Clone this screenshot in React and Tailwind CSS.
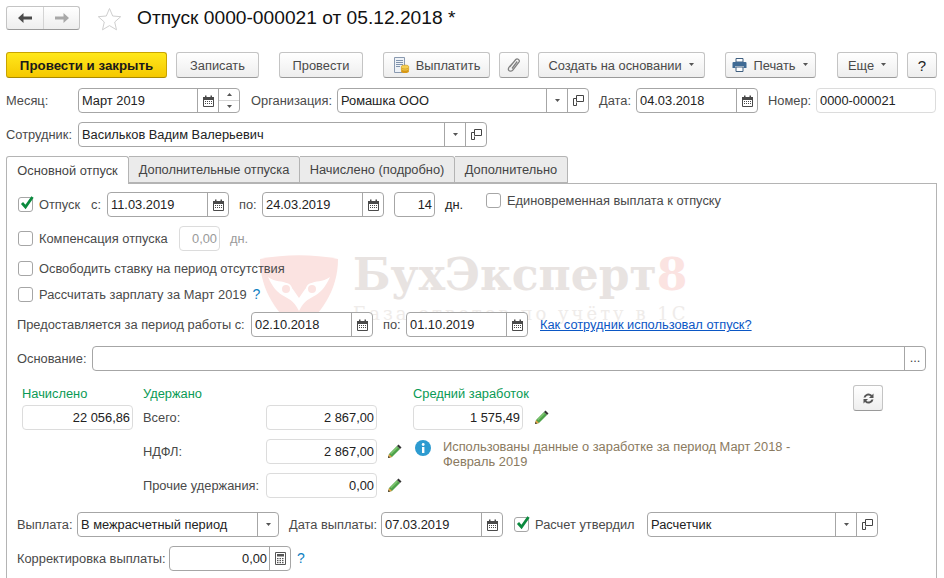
import React from "react";

const Cal = () => (
  <svg width="11" height="12" viewBox="0 0 11 12" className="block">
    <path d="M0.5 2.5h10v9h-10z" fill="#fff" stroke="#4a4a4a" />
    <rect x="0" y="2" width="11" height="3" fill="#4a4a4a" />
    <rect x="2" y="0.5" width="1.5" height="2.5" fill="#4a4a4a" />
    <rect x="7.5" y="0.5" width="1.5" height="2.5" fill="#4a4a4a" />
    {[2, 4, 6, 8].map((x) => <rect key={x} x={x} y="6" width="1" height="1" fill="#4a4a4a" />)}
    {[2, 4, 6, 8].map((x) => <rect key={x} x={x} y="8" width="1" height="1" fill="#4a4a4a" />)}
  </svg>
);
const Caret = () => <svg width="7" height="4" viewBox="0 0 7 4" className="block"><path d="M1 0h5L3.5 3z" fill="#555" /></svg>;
const OpenIcon = () => (
  <svg width="12" height="12" viewBox="0 0 12 12" className="block">
    <path d="M4.5 0.5h7v6h-7z" fill="none" stroke="#444" />
    <path d="M4.5 3.5h-3v7h3v-3" fill="none" stroke="#444" />
  </svg>
);
const Spin = () => (
  <div className="flex flex-col w-full h-full">
    <div className="flex-1 flex items-center justify-center border-b border-[#d5d5d5]"><svg width="5" height="3" viewBox="0 0 5 3"><path d="M2.5 0L5 3H0z" fill="#555" /></svg></div>
    <div className="flex-1 flex items-center justify-center"><svg width="5" height="3" viewBox="0 0 5 3"><path d="M0 0h5L2.5 3z" fill="#555" /></svg></div>
  </div>
);
const Calc = () => (
  <svg width="11" height="13" viewBox="0 0 11 13" className="block">
    <path d="M0.5 0.5h10v12h-10z" fill="#fff" stroke="#555" />
    <rect x="2" y="2" width="7" height="2.5" fill="#555" />
    {[2, 4.5, 7].map((x) => [6, 8, 10].map((y) => <rect key={x + "-" + y} x={x} y={y} width="1.5" height="1.2" fill="#555" />))}
  </svg>
);
const Pencil = () => (
  <svg width="15" height="15" viewBox="0 0 15 15" className="block">
    <path d="M1 14l1-4 8-8 3 3-8 8z" fill="#4ea24a" />
    <path d="M3.2 9.2l6.6-6.6 1.2 1.2-6.8 6.6z" fill="#7cc46e" />
    <path d="M1 14l1-4 3 3z" fill="#e8a24a" />
    <path d="M1 14l.5-2 1.5 1.5z" fill="#333" />
    <path d="M10 2l1.5-1.5 3 3L13 5z" fill="#333" />
  </svg>
);

function Field({ className, value, right, buttons = [], readOnly, textClass = "text-[#222]" }) {
  return (
    <div className={"flex h-[25px] shrink-0 rounded-[4px] overflow-hidden bg-white border " + (readOnly ? "border-[#dcdcdc] " : "border-[#a6a6a6] ") + (className || "")}>
      <div className={"flex-1 min-w-0 flex items-center pl-[3px] pr-[2px] whitespace-nowrap " + (right ? "justify-end " : "") + textClass}>{value}</div>
      {buttons.map((b, i) => (
        <div key={i} className="w-[21px] shrink-0 border-l border-[#a6a6a6] flex items-center justify-center">{b}</div>
      ))}
    </div>
  );
}

function Btn({ className, children, primary }) {
  return (
    <div className={"h-[26px] shrink-0 flex items-center justify-center rounded-[3px] border whitespace-nowrap " + (primary
      ? "bg-gradient-to-b from-[#ffe81a] to-[#f5c800] border-[#c9a400] border-b-[#a98a00] font-bold text-[13.3px] text-[#1a1a1a] "
      : "bg-gradient-to-b from-white to-[#eeeeee] border-[#c4c4c4] border-b-[#9a9a9a] text-[#4a4a4a] ") + (className || "")}>
      {children}
    </div>
  );
}

const Check = ({ on, className }) => (
  <div className={"relative w-[15px] h-[15px] shrink-0 rounded-[3px] border border-[#a6a6a6] bg-white " + (className || "")}>
    {on && (
      <svg width="16" height="16" viewBox="0 0 16 16" className="absolute left-[0px] top-[-3px]">
        <path d="M3 8l3.5 4L13.5 2" fill="none" stroke="#0b8a3e" strokeWidth="2.8" />
      </svg>
    )}
  </div>
);

const Label = ({ className, children }) => <div className={"shrink-0 whitespace-nowrap text-[#4a4a4a] " + (className || "")}>{children}</div>;
const Help = ({ className }) => <span className={"text-[#0f7fc2] text-[14px] " + (className || "")}>?</span>;

export default function App() {
  return (
    <div className="relative w-[944px] h-[578px] overflow-hidden bg-white text-[12.85px] leading-[15px] font-['Liberation_Sans',Arial,sans-serif]">
      {/* header */}
      <div className="flex items-center pl-[6px] pt-[6px] h-[30px]">
        <div className="flex w-[74px] h-[24px] rounded-[3px] border border-[#c4c4c4] border-b-[#9a9a9a] bg-gradient-to-b from-white to-[#eeeeee]">
          <div className="w-[37px] flex items-center justify-center border-r border-[#d4d4d4]">
            <svg width="14" height="10" viewBox="0 0 14 10"><path d="M5.5 0L0 5l5.5 5V6.5H14v-3H5.5z" fill="#4a4a4a" /></svg>
          </div>
          <div className="flex-1 flex items-center justify-center">
            <svg width="14" height="10" viewBox="0 0 14 10"><path d="M8.5 0L14 5l-5.500 5V6.500H0v-3h8.500z" fill="#a8a8a8" /></svg>
          </div>
        </div>
        <svg width="25" height="24" viewBox="0 0 25 24" className="ml-[17px] mt-[1px]">
          <path d="M12.500 1.500l3.200 7.500 8 .7-6 5.300 1.800 7.800-7-4.200-7 4.200 1.800-7.800-6-5.300 8-.7z" fill="#fff" stroke="#cfcfcf" />
        </svg>
        <div className="ml-[15px] text-[19.2px] leading-[24px] text-[#111] whitespace-nowrap">Отпуск 0000-000021 от 05.12.2018 *</div>
      </div>

      {/* toolbar */}
      <div className="flex mt-[22px] pl-[6px]">
        <Btn primary className="w-[161px]">Провести и закрыть</Btn>
        <Btn className="w-[83px] ml-[9px]">Записать</Btn>
        <Btn className="w-[84px] ml-[20px]">Провести</Btn>
        <Btn className="w-[107px] ml-[20px] gap-[6px]">
          <svg width="17" height="17" viewBox="0 0 17 17">
            <path d="M1.500 0.500h10v15h-10z" fill="#eef2f7" stroke="#8a9ab0" />
            <path d="M3 3.500h7M3 5.500h7M3 7.500h7M3 9.500h4" stroke="#7f93ad" />
            <ellipse cx="12" cy="14" rx="4" ry="2" fill="#d99a18" />
            <ellipse cx="12" cy="12" rx="4" ry="2" fill="#f0c040" stroke="#c08a10" strokeWidth="0.500" />
            <ellipse cx="12" cy="10" rx="4" ry="2" fill="#f5cf55" stroke="#c08a10" strokeWidth="0.500" />
          </svg>
          <span>Выплатить</span>
        </Btn>
        <Btn className="w-[30px] ml-[9px]">
          <svg width="15" height="16" viewBox="0 0 15 16">
            <path d="M2.800 9.800L8.800 2.500c1.500-1.700 4.600.6 3.100 2.700L6 12.800c-1.100 1.400-3.100 1.700-4 .8-.9-.9-.6-2.600.5-3.900L8 3.600M5 11.500l5.200-7" fill="none" stroke="#808080" strokeWidth="1.300" />
          </svg>
        </Btn>
        <Btn className="w-[167px] ml-[9px] gap-[6px]"><span>Создать на основании</span><Caret /></Btn>
        <Btn className="w-[91px] ml-[20px] gap-[6px]">
          <svg width="15" height="14" viewBox="0 0 15 14">
            <path d="M4 0.500h7V4H4z" fill="#fff" stroke="#3f5f80" />
            <path d="M1.500 4h12a1 1 0 0 1 1 1v5h-3V8h-8v2h-3V5a1 1 0 0 1 1-1z" fill="#3f6a94" />
            <path d="M4 9h7v4.500H4z" fill="#fff" stroke="#3f5f80" />
          </svg>
          <span>Печать</span><Caret />
        </Btn>
        <Btn className="w-[61px] ml-[21px] gap-[6px]"><span>Еще</span><Caret /></Btn>
        <Btn className="w-[30px] ml-[9px] text-[15px] text-[#222]">?</Btn>
      </div>

      {/* main rows */}
      <div className="flex items-center mt-[10px] pl-[6px] h-[25px]">
        <Label className="w-[72px]">Месяц:</Label>
        <Field className="w-[162px]" value="Март 2019" buttons={[<Cal />, <Spin />]} />
        <Label className="w-[86px] ml-[11px]">Организация:</Label>
        <Field className="w-[252px]" value="Ромашка ООО" buttons={[<Caret />, <OpenIcon />]} />
        <Label className="w-[37px] ml-[10px]">Дата:</Label>
        <Field className="w-[122px]" value="04.03.2018" buttons={[<Cal />]} />
        <Label className="w-[48px] ml-[10px]">Номер:</Label>
        <Field className="w-[120px]" readOnly value="0000-000021" />
      </div>
      <div className="flex items-center mt-[9px] pl-[6px] h-[25px]">
        <Label className="w-[72px]">Сотрудник:</Label>
        <Field className="w-[409px]" value="Васильков Вадим Валерьевич" buttons={[<Caret />, <OpenIcon />]} />
      </div>

      {/* tabs */}
      <div className="flex mt-[9px] ml-[6px] h-[28px] relative z-10">
        <div className="w-[123px] h-[28px] bg-white border border-[#b4b4b4] border-b-0 rounded-t-[3px] flex items-center justify-center text-[#444]">Основной отпуск</div>
        <div className="w-[171px] h-[27px] bg-[#ebebeb] border-y border-r border-[#b4b4b4] rounded-tr-[3px] flex items-center justify-center text-[#444]">Дополнительные отпуска</div>
        <div className="w-[155px] h-[27px] bg-[#ebebeb] border-y border-r border-[#b4b4b4] rounded-tr-[3px] flex items-center justify-center text-[#444]">Начислено (подробно)</div>
        <div className="w-[113px] h-[27px] bg-[#ebebeb] border-y border-r border-[#b4b4b4] rounded-tr-[3px] flex items-center justify-center text-[#444]">Дополнительно</div>
      </div>

      {/* panel */}
      <div className="relative ml-[6px] mt-[-1px] w-[931px] h-[396px] border-x border-t border-[#b4b4b4] pl-[10px]">
        {/* watermark */}
        <div className="absolute left-[253px] top-[71px] w-[440px] h-[90px] pointer-events-none select-none">
          <svg width="78" height="76" viewBox="0 0 78 76" className="absolute left-0 top-0">
            <path d="M0 4C25 -1 53 -1 78 4C78 36 60 60 39 76C18 60 0 36 0 4z" fill="#fbe3e1" />
            <path d="M8 22c8 6 14 3 20 7 4 3 6 7 11 14 5-7 7-11 11-14 6-4 12-1 20-7-4 9-8 14-14 18-6 4-11 4-17 16-6-12-11-12-17-16-6-4-10-9-14-18z" fill="#fff" />
            <circle cx="26" cy="34" r="5" fill="#fbe3e1" stroke="#fff" strokeWidth="2" />
            <circle cx="52" cy="34" r="5" fill="#fbe3e1" stroke="#fff" strokeWidth="2" />
          </svg>
          <div className="absolute left-[93px] top-[-6px] text-[44px] leading-[52px] font-bold whitespace-nowrap text-[#e8e3e1] font-['DejaVu_Serif',serif]">БухЭксперт<span className="text-[#fbe3e1]">8</span></div>
          <div className="absolute left-[93px] top-[48px] text-[18px] leading-[22px] tracking-[3px] whitespace-nowrap text-[#efecea] font-['DejaVu_Serif',serif]">База ответов по учёту в 1С</div>
        </div>

        <div className="relative">
          <div className="flex items-center mt-[8px] h-[25px]">
            <Check on className="ml-[1px]" />
            <Label className="w-[52px] ml-[6px]">Отпуск</Label>
            <Label className="w-[16px]">с:</Label>
            <Field className="w-[122px]" value="11.03.2019" buttons={[<Cal />]} />
            <Label className="w-[23px] ml-[10px]">по:</Label>
            <Field className="w-[122px]" value="24.03.2019" buttons={[<Cal />]} />
            <Field className="w-[41px] ml-[10px]" right value="14" />
            <Label className="ml-[10px] w-[41px] text-[#222]">дн.</Label>
            <Check className="self-start mt-[1px]" />
            <Label className="ml-[6px] self-start mt-[1px]">Единовременная выплата к отпуску</Label>
          </div>
          <div className="flex items-center mt-[9px] h-[25px]">
            <Check className="ml-[1px]" />
            <Label className="w-[140px] ml-[6px]">Компенсация отпуска</Label>
            <Field className="w-[41px]" readOnly right value="0,00" textClass="text-[#9a9a9a]" />
            <Label className="ml-[10px] text-[#9a9a9a]">дн.</Label>
          </div>
          <div className="flex items-center mt-[10px] h-[15px]">
            <Check className="ml-[1px]" />
            <Label className="ml-[6px]">Освободить ставку на период отсутствия</Label>
          </div>
          <div className="flex items-center mt-[11px] h-[15px]">
            <Check className="ml-[1px]" />
            <Label className="ml-[6px]">Рассчитать зарплату за Март 2019</Label>
            <Help className="ml-[6px]" />
          </div>
          <div className="flex items-center mt-[10px] h-[25px]">
            <Label className="w-[234px]">Предоставляется за период работы с:</Label>
            <Field className="w-[122px]" value="02.10.2018" buttons={[<Cal />]} />
            <Label className="w-[23px] ml-[10px]">по:</Label>
            <Field className="w-[122px]" value="01.10.2019" buttons={[<Cal />]} />
            <a className="ml-[12px] whitespace-nowrap text-[#0b57c5] underline">Как сотрудник использовал отпуск?</a>
          </div>
          <div className="flex items-center mt-[9px] h-[25px]">
            <Label className="w-[75px]">Основание:</Label>
            <Field className="w-[834px]" value="" buttons={[<span className="text-[#444] leading-none">...</span>]} />
          </div>

          {/* totals */}
          <div className="flex mt-[15px] h-[112px]">
            <div className="ml-[5px] w-[111px] flex flex-col">
              <div className="h-[14px] text-[#0a9a55] whitespace-nowrap">Начислено</div>
              <Field className="w-[111px] mt-[5px]" readOnly right value="22 056,86" />
            </div>
            <div className="ml-[10px] w-[259px] flex flex-col">
              <div className="h-[14px] text-[#0a9a55]">Удержано</div>
              <div className="flex items-center mt-[5px] h-[25px]">
                <Label className="w-[123px]">Всего:</Label>
                <Field className="w-[111px]" readOnly right value="2 867,00" />
              </div>
              <div className="flex items-center mt-[9px] h-[25px]">
                <Label className="w-[123px]">НДФЛ:</Label>
                <Field className="w-[111px]" readOnly right value="2 867,00" />
                <div className="ml-[10px]"><Pencil /></div>
              </div>
              <div className="flex items-center mt-[9px] h-[25px]">
                <Label className="w-[123px]">Прочие удержания:</Label>
                <Field className="w-[111px]" readOnly right value="0,00" />
                <div className="ml-[10px]"><Pencil /></div>
              </div>
            </div>
            <div className="ml-[11px] w-[400px] flex flex-col">
              <div className="h-[14px] text-[#0a9a55]">Средний заработок</div>
              <div className="flex items-center mt-[5px] h-[25px]">
                <Field className="w-[110px]" readOnly right value="1 575,49" />
                <div className="ml-[11px]"><Pencil /></div>
              </div>
              <div className="flex mt-[9px]">
                <svg width="16" height="16" viewBox="0 0 16 16" className="ml-[2px] mt-[1px] shrink-0">
                  <circle cx="8" cy="8" r="8" fill="#2d9bd0" />
                  <rect x="7" y="7" width="2.400" height="6" fill="#fff" />
                  <circle cx="8.200" cy="4.500" r="1.400" fill="#fff" />
                </svg>
                <div className="ml-[12px] w-[370px] leading-[15px] text-[#8a7a60]">Использованы данные о заработке за период Март 2018 - Февраль 2019</div>
              </div>
            </div>
            <Btn className="w-[30px] ml-[40px] mt-[-1px]">
              <svg width="13" height="13" viewBox="0 0 13 13">
                <path d="M1.500 5.500A5 5 0 0 1 10 3L11.500 1.500V6H7L8.700 4.300A3.200 3.200 0 0 0 3.500 5.500z" fill="#555" />
                <path d="M11.500 7.500A5 5 0 0 1 3 10L1.500 11.500V7H6L4.300 8.700A3.200 3.200 0 0 0 9.500 7.500z" fill="#555" />
              </svg>
            </Btn>
          </div>

          <div className="flex items-center mt-[14px] h-[25px]">
            <Label className="w-[60px]">Выплата:</Label>
            <Field className="w-[202px]" value="В межрасчетный период" buttons={[<Caret />]} />
            <Label className="w-[92px] ml-[10px]">Дата выплаты:</Label>
            <Field className="w-[122px]" value="07.03.2019" buttons={[<Cal />]} />
            <Check on className="ml-[11px]" />
            <Label className="w-[112px] ml-[6px]">Расчет утвердил</Label>
            <Field className="w-[231px]" value="Расчетчик" buttons={[<Caret />, <OpenIcon />]} />
          </div>
          <div className="flex items-center mt-[9px] h-[25px]">
            <Label className="w-[152px]">Корректировка выплаты:</Label>
            <Field className="w-[122px]" right value="0,00" buttons={[<Calc />]} />
            <Help className="ml-[6px]" />
          </div>
        </div>
      </div>
    </div>
  );
}
